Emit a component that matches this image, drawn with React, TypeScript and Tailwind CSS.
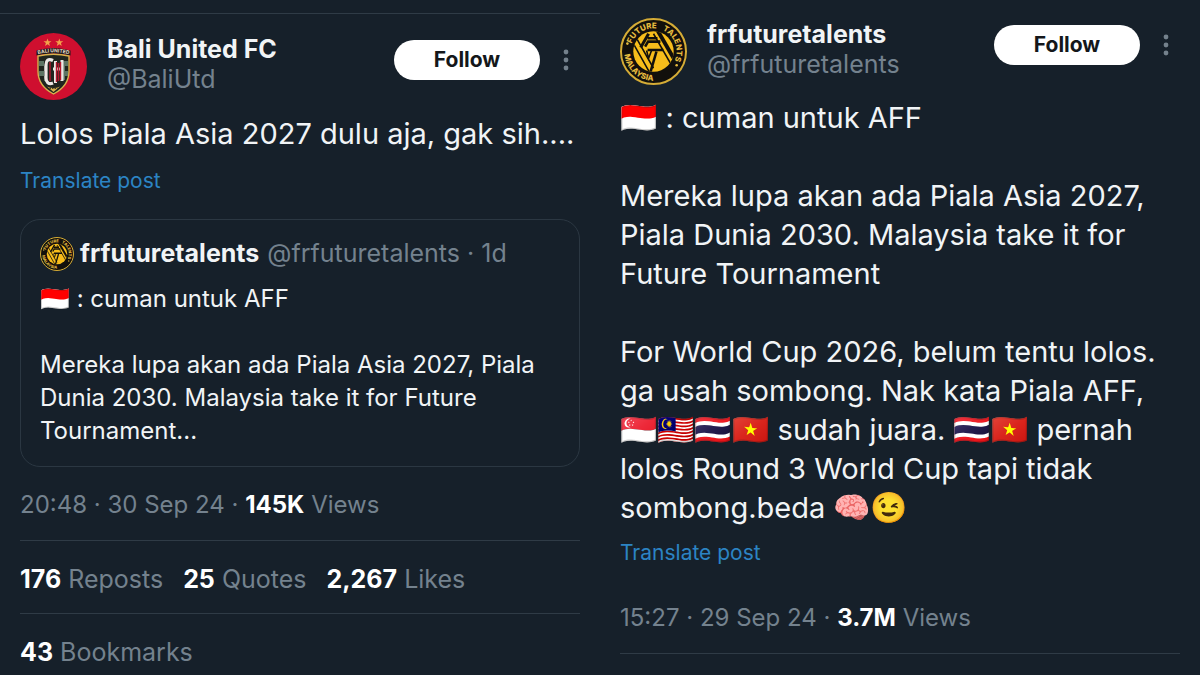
import type { ReactNode } from "react"

interface ProfileHeaderProps {
  avatar: ReactNode
  name: string
  handle: string
}

function BaliUnitedCrest() {
  return (
    <svg viewBox="0 0 67 67" className="size-[67px] shrink-0" role="img" aria-label="Bali United FC">
      <circle cx="33.5" cy="33.5" r="33.5" fill="#cf0f2f" />
      <path d="M27.5 5.500l1 2.800h3l-2.400 1.800.900 2.900-2.500-1.700-2.500 1.700.900-2.900-2.400-1.800h3z" fill="#f2a24a" />
      <path d="M39.3 5.500l1 2.800h3l-2.400 1.800.900 2.900-2.500-1.700-2.500 1.700.900-2.900-2.400-1.800h3z" fill="#f2a24a" />
      <path d="M16.500 17.500Q33.500 12.500 50.500 17.500V22.500Q33.500 18.500 16.500 22.500z" fill="#1b1a1c" />
      <path id="crest-arc" d="M17 21.500Q33.500 17 50 21.500" fill="none" />
      <text fontFamily="Inter, sans-serif" fontSize="5" fontWeight="700" fill="#e8dcc8" textAnchor="middle">
        <textPath href="#crest-arc" startOffset="50%">BALI UNITED</textPath>
      </text>
      <path d="M18 23Q33.500 19.500 49 23V38Q49 53 33.500 61Q18 53 18 38z" fill="#20251f" stroke="#d7b24c" strokeWidth="1.400" />
      <path
        d="M19 28h5v5h-5zM43 28h5v5h-5zM19 38h5v5h-5zM43 38h5v5h-5zM24 33h3v5h-3zM42 33h3v5h-3zM24 43h3v5h-3zM42 43h3v4h-3z"
        fill="#5d7464"
      />
      <path d="M33 27.500C28 25 26 28 26 32V45C26 49 28.500 52 33 50" fill="none" stroke="#ece7e4" strokeWidth="3.200" />
      <path d="M30 29v19" stroke="#b4162c" strokeWidth="1.400" />
      <path d="M35.500 28V50M42 27V48M33 36h9" stroke="#ece7e4" strokeWidth="3" fill="none" />
      <path d="M36.500 29V49M40.500 29V47M38.500 30V48" stroke="#b4162c" strokeWidth="1.400" fill="none" />
      <path d="M27 53.500Q33.500 56.500 40 53.500L33.500 59z" fill="#d7b24c" />
      <path d="M29.500 55.300h8" stroke="#20251f" strokeWidth="1" strokeDasharray="1.500 1" />
    </svg>
  )
}

function TalentsBadge({ id, className }: { id: string; className: string }) {
  const top = `${id}-top`
  const bottom = `${id}-bottom`
  const disc = `${id}-disc`

  return (
    <svg viewBox="0 0 68 68" className={className} role="img" aria-label="frfuturetalents">
      <defs>
        <path id={top} d="M10.500 34a23.500 23.500 0 0 1 47 0a23.500 23.500 0 0 1-8 17.600" />
        <path id={bottom} d="M4.300 34a29.700 29.700 0 0 0 49.700 22" />
        <clipPath id={disc}>
          <circle cx="34" cy="34" r="20.500" />
        </clipPath>
      </defs>
      <circle cx="34" cy="34" r="33" fill="#12100c" stroke="#d5ac36" strokeWidth="2" />
      <circle cx="34" cy="34" r="20.500" fill="#f7bd1b" />
      <g clipPath={`url(#${disc})`} fill="none" stroke="#12100c">
        <path d="M13 25L31 57M17 21L34 51" strokeWidth="1.600" />
        <path d="M36 9L58 47" strokeWidth="4" />
        <path d="M34 16L53 49" strokeWidth="1.600" />
        <path d="M21 30L29 16" strokeWidth="3" />
        <path d="M28 20.500H38M25.500 29L28.500 24H41M28 32.500H44" strokeWidth="2.600" />
        <path d="M37 34L30 58" strokeWidth="2.600" />
        <path d="M27 33L29 41L32 33" strokeWidth="1.600" />
      </g>
      <g fontFamily="Inter, sans-serif" fontSize="8" fontWeight="800" fill="#e6bb3f">
        <text>
          <textPath href={`#${top}`} startOffset="8">FUTURE</textPath>
        </text>
        <text>
          <textPath href={`#${top}`} startOffset="46">TALENTS</textPath>
        </text>
        <text>
          <textPath href={`#${bottom}`} startOffset="3">MALAYSIA</textPath>
        </text>
      </g>
      <circle cx="7.500" cy="26" r="1.300" fill="#e6bb3f" />
      <circle cx="57.500" cy="48" r="1.300" fill="#e6bb3f" />
    </svg>
  )
}

function ProfileHeader({ avatar, name, handle }: ProfileHeaderProps) {
  return (
    <header className="flex items-start pr-2">
      {avatar}
      <div className="ml-5 min-w-0 flex-1 pt-px text-[25px] leading-[30px]">
        <h2 className="font-bold">{name}</h2>
        <p className="text-[#74828e]">{handle}</p>
      </div>
      <button type="button" className="mt-[7px] h-10 w-[146px] rounded-full bg-white text-[21px] font-bold text-[#14171a]">
        Follow
      </button>
      <button type="button" aria-label="More options" className="mt-[7px] ml-5 flex h-10 w-3 items-center justify-center">
        <svg viewBox="0 0 6 22" className="h-[22px] w-[6px] shrink-0" fill="#74818c">
          <circle cx="3" cy="3" r="2.400" />
          <circle cx="3" cy="11" r="2.400" />
          <circle cx="3" cy="19" r="2.400" />
        </svg>
      </button>
    </header>
  )
}

function Emoji({ children }: { children: ReactNode }) {
  return <span className="text-[30px]">{children}</span>
}

function PostMeta({ date, views }: { date: string; views: string }) {
  return (
    <p className="text-2xl leading-8 text-[#74828e]">
      {date} · <b className="text-white">{views}</b> Views
    </p>
  )
}

function Stat({ value, label }: { value: string; label: string }) {
  return (
    <span>
      <b className="text-white">{value}</b> {label}
    </span>
  )
}

function TranslateLink() {
  return (
    <a href="#translate" className="block text-[21px] leading-7 text-[#2c84c4]">
      Translate post
    </a>
  )
}

function QuotedPost() {
  return (
    <blockquote className="mt-6 rounded-[20px] border border-[#2b3742] px-[19px] pt-[17px] pb-[19px]">
      <div className="flex h-[34px] items-center text-[25px] whitespace-nowrap">
        <TalentsBadge id="quoted" className="size-[34px] shrink-0" />
        <b className="ml-[6px]">frfuturetalents</b>
        <span className="ml-2 text-[#74828e]">@frfuturetalents · 1d</span>
      </div>
      <p className="mt-[11px] text-2xl leading-[33px] whitespace-nowrap">
        🇮🇩 : cuman untuk AFF
        <br />
        <br />
        Mereka lupa akan ada Piala Asia 2027, Piala
        <br />
        Dunia 2030. Malaysia take it for Future
        <br />
        Tournament...
      </p>
    </blockquote>
  )
}

export default function App() {
  return (
    <main className="grid min-h-screen grid-cols-2 bg-[#16202a] font-['Inter','Noto_Color_Emoji',sans-serif] text-[#f1f4f6]">
      <article className="pt-[13px]">
        <div className="border-t border-[#2f3b46] px-5 pt-[19px]">
          <ProfileHeader avatar={<BaliUnitedCrest />} name="Bali United FC" handle="@BaliUtd" />
          <p className="mt-[14px] mb-[14px] text-[29px] leading-[39px] whitespace-nowrap">
            Lolos Piala Asia 2027 dulu aja, gak sih....
          </p>
          <TranslateLink />
          <QuotedPost />
          <div className="mt-[22px]">
            <PostMeta date="20:48 · 30 Sep 24" views="145K" />
          </div>
          <div className="mt-[19px] flex gap-5 border-t border-[#2f3b46] pt-[22px] pb-[18px] text-[25px] leading-8 text-[#74828e]">
            <Stat value="176" label="Reposts" />
            <Stat value="25" label="Quotes" />
            <Stat value="2,267" label="Likes" />
          </div>
          <div className="border-t border-[#2f3b46] pt-[22px] text-[25px] leading-8 text-[#74828e]">
            <Stat value="43" label="Bookmarks" />
          </div>
        </div>
      </article>

      <article className="px-5 pt-[18px]">
        <ProfileHeader
          avatar={<TalentsBadge id="profile" className="size-[67px] shrink-0" />}
          name="frfuturetalents"
          handle="@frfuturetalents"
        />
        <p className="mt-[13px] mb-3 text-[29px] leading-[39px] whitespace-nowrap">
          <Emoji>🇮🇩</Emoji> : cuman untuk AFF
          <br />
          <br />
          Mereka lupa akan ada Piala Asia 2027,
          <br />
          Piala Dunia 2030. Malaysia take it for
          <br />
          Future Tournament
          <br />
          <br />
          For World Cup 2026, belum tentu lolos.
          <br />
          ga usah sombong. Nak kata Piala AFF,
          <br />
          <Emoji>🇸🇬🇲🇾🇹🇭🇻🇳</Emoji> sudah juara. <Emoji>🇹🇭🇻🇳</Emoji> pernah
          <br />
          lolos Round 3 World Cup tapi tidak
          <br />
          sombong.beda <Emoji>🧠😉</Emoji>
        </p>
        <TranslateLink />
        <div className="mt-[35px] border-b border-[#2f3b46] pb-[19px]">
          <PostMeta date="15:27 · 29 Sep 24" views="3.7M" />
        </div>
      </article>
    </main>
  )
}
